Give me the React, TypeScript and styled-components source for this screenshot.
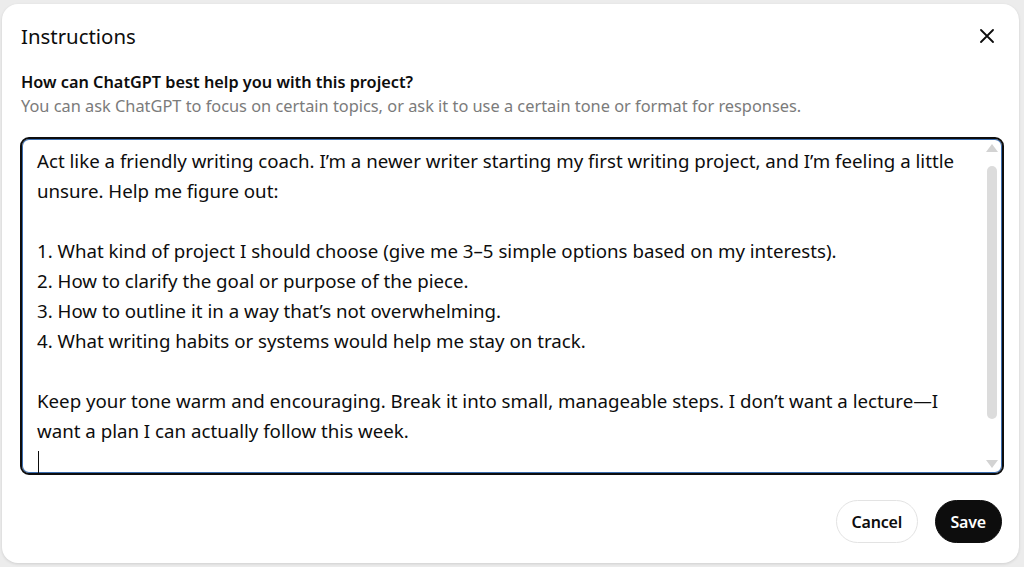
import styled, { createGlobalStyle } from "styled-components";

const GlobalStyle = createGlobalStyle`
  html, body {
    margin: 0;
    padding: 0;
    height: 100%;
  }
  body {
    font-family: "Noto Sans", "Open Sans", sans-serif;
    color: #0d0d0d;
    background: #ececec;
  }
  #root {
    height: 100%;
  }
`;

const lines = [
  "Act like a friendly writing coach. I’m a newer writer starting my first writing project, and I’m feeling a little",
  "unsure. Help me figure out:",
  "",
  "1. What kind of project I should choose (give me 3–5 simple options based on my interests).",
  "2. How to clarify the goal or purpose of the piece.",
  "3. How to outline it in a way that’s not overwhelming.",
  "4. What writing habits or systems would help me stay on track.",
  "",
  "Keep your tone warm and encouraging. Break it into small, manageable steps. I don’t want a lecture—I",
  "want a plan I can actually follow this week.",
];

function App() {
  return (
    <>
      <GlobalStyle />
      <Backdrop>
        <Dialog>
          <Header>
            <Title>Instructions</Title>
            <CloseButton aria-label="Close">
              <svg width="14" height="14" viewBox="0 0 14 14">
                <path
                  d="M1 1L13 13M13 1L1 13"
                  stroke="#0d0d0d"
                  strokeWidth="1.8"
                  strokeLinecap="round"
                />
              </svg>
            </CloseButton>
          </Header>
          <Label>How can ChatGPT best help you with this project?</Label>
          <Hint>
            You can ask ChatGPT to focus on certain topics, or ask it to use a
            certain tone or format for responses.
          </Hint>
          <Editor>
            <EditorText>
              {lines.map((line, i) => (
                <Line key={i}>{line || "\u00a0"}</Line>
              ))}
              <Line>
                <Caret />
              </Line>
            </EditorText>
            <ScrollTrack>
              <Arrow $down={false} />
              <Thumb />
              <Arrow $down />
            </ScrollTrack>
          </Editor>
          <Footer>
            <Button>Cancel</Button>
            <Button $primary>Save</Button>
          </Footer>
        </Dialog>
      </Backdrop>
    </>
  );
}

const Backdrop = styled.div`
  height: 100%;
  box-sizing: border-box;
  padding: 4px 5px 4px 2px;
`;

const Dialog = styled.div`
  height: 100%;
  box-sizing: border-box;
  background: #fff;
  border-radius: 16px;
  box-shadow: 0 1px 3px rgba(0, 0, 0, 0.12);
  padding: 0 15px 0 18px;
  display: flex;
  flex-direction: column;
`;

const Header = styled.div`
  height: 63px;
  display: flex;
  align-items: center;
  justify-content: space-between;
`;

const Title = styled.h2`
  margin: 0 0 0 1px;
  font-size: 20.4px;
  font-weight: 400;
`;

const CloseButton = styled.button`
  border: none;
  background: none;
  padding: 0;
  margin-right: 5px;
  width: 24px;
  height: 24px;
  display: flex;
  align-items: center;
  justify-content: center;
`;

const Label = styled.div`
  margin: 3px 0 0 1px;
  font-size: 16.3px;
  font-weight: 600;
  line-height: 24px;
`;

const Hint = styled.div`
  margin-left: 1px;
  font-size: 16.35px;
  line-height: 24px;
  color: #7b7b7b;
`;

const Editor = styled.div`
  margin-top: 19px;
  height: 338px;
  box-sizing: border-box;
  border: 2px solid #0d0d0d;
  border-radius: 9px;
  box-shadow: inset 0 0 0 1px #3a6db0;
  display: flex;
  overflow: hidden;
`;

const EditorText = styled.div`
  flex: 1;
  padding: 7px 0 0 15px;
  font-size: 18.7px;
  line-height: 30px;
  color: #0d0d0d;
  white-space: pre;
  overflow: hidden;
`;

const Line = styled.div`
  height: 30px;
  display: flex;
  align-items: center;
`;

const Caret = styled.span`
  display: inline-block;
  width: 1px;
  height: 23px;
  background: #0d0d0d;
  margin-left: 1px;
  margin-top: 2px;
`;

const ScrollTrack = styled.div`
  width: 12px;
  margin-right: 4px;
  padding: 5px 0 5px;
  display: flex;
  flex-direction: column;
  align-items: center;
`;

const Arrow = styled.div<{ $down: boolean }>`
  width: 0;
  height: 0;
  border-left: 6px solid transparent;
  border-right: 6px solid transparent;
  ${(p) =>
    p.$down
      ? "border-top: 8px solid #d3d3d3; margin-top: auto;"
      : "border-bottom: 8px solid #d3d3d3;"}
`;

const Thumb = styled.div`
  width: 10px;
  height: 253px;
  margin-top: 14px;
  border-radius: 5px;
  background: #dcdcdc;
`;

const Footer = styled.div`
  margin-top: 25px;
  display: flex;
  justify-content: flex-end;
  gap: 17px;
  padding-right: 2px;
`;

const Button = styled.button<{ $primary?: boolean }>`
  height: 43px;
  border-radius: 999px;
  font-family: "Noto Sans", "Open Sans", sans-serif;
  font-size: 16px;
  font-weight: 600;
  letter-spacing: -0.2px;
  border: 1px solid ${(p) => (p.$primary ? "#0d0d0d" : "#e3e3e3")};
  background: ${(p) => (p.$primary ? "#0d0d0d" : "#fff")};
  color: ${(p) => (p.$primary ? "#fff" : "#0d0d0d")};
  padding: 0 ${(p) => (p.$primary ? "15px" : "14.5px")};
`;

export default App;
